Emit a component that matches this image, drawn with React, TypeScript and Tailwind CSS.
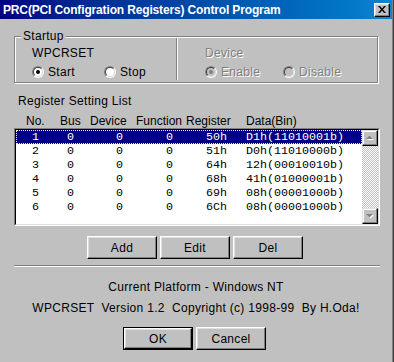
import React from "react";

const rows = [
  ["1", "0", "0", "0", "50h", "D1h(11010001b)"],
  ["2", "0", "0", "0", "51h", "D0h(11010000b)"],
  ["3", "0", "0", "0", "64h", "12h(00010010b)"],
  ["4", "0", "0", "0", "68h", "41h(01000001b)"],
  ["5", "0", "0", "0", "69h", "08h(00001000b)"],
  ["6", "0", "0", "0", "6Ch", "08h(00001000b)"],
];

const raised =
  "bg-[#c0c0c0] border border-t-white border-l-white border-r-black border-b-black shadow-[inset_-1px_-1px_0_#808080,inset_1px_1px_0_#dfdfdf]";

const disabledText = "text-[#808080] [text-shadow:1px_1px_0_#fff]";

const Radio = ({
  label,
  checked,
  disabled,
  width,
}: {
  label: string;
  checked?: boolean;
  disabled?: boolean;
  width: string;
}): JSX.Element => (
  <div className={`flex items-center gap-[4px] ${width}`}>
    <span className="flex w-[12px] h-[12px] rounded-full border border-t-[#808080] border-l-[#808080] border-r-white border-b-white">
      <span
        className={`flex flex-1 items-center justify-center rounded-full border border-t-[#404040] border-l-[#404040] border-r-[#dfdfdf] border-b-[#dfdfdf] ${
          disabled ? "bg-[#c0c0c0]" : "bg-white"
        }`}
      >
        {checked && (
          <span
            className={`w-[4px] h-[4px] rounded-full ${disabled ? "bg-[#808080]" : "bg-black"}`}
          />
        )}
      </span>
    </span>
    <span className={disabled ? disabledText : ""}>{label}</span>
  </div>
);

const Button = ({ label, isDefault }: { label: string; isDefault?: boolean }): JSX.Element =>
  isDefault ? (
    <div className="w-[70px] h-[23px] border border-black flex">
      <div className={`flex-1 flex items-center justify-center ${raised}`}>{label}</div>
    </div>
  ) : (
    <div className={`w-[70px] h-[23px] flex items-center justify-center ${raised}`}>{label}</div>
  );

const Arrow = ({ up }: { up?: boolean }): JSX.Element => (
  <svg width="8" height="5" viewBox="0 0 8 5">
    <path d={up ? "M1 4h7L4.5 0.5z" : "M1 1h7L4.5 4.5z"} fill="#fff" />
    <path d={up ? "M0 3h7L3.5 -0.5z" : "M0 0h7L3.5 3.5z"} fill="#808080" />
  </svg>
);

const App = (): JSX.Element => {
  return (
    <div className="w-[394px] h-[362px] bg-[#c0c0c0] flex flex-col text-black font-['Liberation_Sans',Arial,sans-serif] text-[12px] leading-[14px] tracking-[0.3px] shadow-[inset_-1px_0_0_#404040,inset_-2px_0_0_#808080] overflow-hidden">
      {/* title bar */}
      <div className="w-[392px] h-[19px] flex items-center justify-between pl-[3px] pr-[2px] bg-gradient-to-r from-[#000080] to-[#1084d0]">
        <span className="text-white font-bold tracking-[-0.15px] text-[12px]">
          PRC(PCI Configration Registers) Control Program
        </span>
        <div className={`w-[16px] h-[14px] flex items-center justify-center ${raised}`}>
          <svg width="8" height="7" viewBox="0 0 8 7">
            <path d="M0 0h2l2 2.5L6 0h2L5 3.5 8 7H6L4 4.5 2 7H0l3-3.5z" fill="#000" />
          </svg>
        </div>
      </div>

      {/* Startup group */}
      <div className="relative ml-[14px] mt-[17px] w-[364px] h-[47px] border border-[#808080] shadow-[1px_1px_0_#fff,inset_1px_1px_0_#fff] flex">
        <span className="absolute left-[6px] -top-[8px] bg-[#c0c0c0] px-[2px]">Startup</span>
        <div className="w-[161px] pl-[17px] pt-[9px] flex flex-col">
          <span>WPCRSET</span>
          <div className="flex mt-[5px]">
            <Radio label="Start" checked width="w-[72px]" />
            <Radio label="Stop" width="w-[60px]" />
          </div>
        </div>
        <div className="w-[2px] mt-[1px] mb-[2px] border-l border-[#808080] bg-white" />
        <div className="pl-[27px] pt-[9px] flex flex-col">
          <span className={disabledText}>Device</span>
          <div className="flex mt-[5px]">
            <Radio label="Enable" checked disabled width="w-[78px]" />
            <Radio label="Disable" disabled width="w-[70px]" />
          </div>
        </div>
      </div>

      {/* list */}
      <span className="ml-[18px] mt-[11px]">Register Setting List</span>
      <div className="ml-[14px] mt-[6px] pl-[12px] flex tracking-normal">
        <span className="w-[34px]">No.</span>
        <span className="w-[30px]">Bus</span>
        <span className="w-[46px]">Device</span>
        <span className="w-[50px]">Function</span>
        <span className="w-[60px]">Register</span>
        <span>Data(Bin)</span>
      </div>
      <div className="ml-[14px] w-[366px] h-[98px] flex border border-t-[#808080] border-l-[#808080] border-r-white border-b-white">
        <div className="flex flex-1 bg-white border border-t-black border-l-black border-r-[#dfdfdf] border-b-[#dfdfdf]">
          <div className="flex-1 flex flex-col font-['Liberation_Mono','Courier_New',monospace] text-[11.67px] tracking-normal">
            {rows.map((r, i) => (
              <div
                key={i}
                className={`h-[14px] flex items-center pl-[16px] ${
                  i === 0
                    ? "bg-[#000080] text-white outline-1 outline-dotted outline-[#ffff80] -outline-offset-1"
                    : ""
                }`}
              >
                <span className="w-[35px]">{r[0]}</span>
                <span className="w-[49px]">{r[1]}</span>
                <span className="w-[50px]">{r[2]}</span>
                <span className="w-[40px]">{r[3]}</span>
                <span className="w-[40px]">{r[4]}</span>
                <span>{r[5]}</span>
              </div>
            ))}
          </div>
          <div className="w-[16px] flex flex-col">
            <div className="w-[16px] h-[16px] flex items-center justify-center bg-[#c0c0c0] border border-t-[#dfdfdf] border-l-[#dfdfdf] border-r-black border-b-black shadow-[inset_-1px_-1px_0_#808080,inset_1px_1px_0_#fff]">
              <Arrow up />
            </div>
            <div className="flex-1 bg-[repeating-conic-gradient(#c0c0c0_0_25%,#fff_0_50%)] bg-[length:2px_2px]" />
            <div className="w-[16px] h-[16px] flex items-center justify-center bg-[#c0c0c0] border border-t-[#dfdfdf] border-l-[#dfdfdf] border-r-black border-b-black shadow-[inset_-1px_-1px_0_#808080,inset_1px_1px_0_#fff]">
              <Arrow />
            </div>
          </div>
        </div>
      </div>

      <div className="ml-[87px] mt-[10px] flex gap-[3px]">
        <Button label="Add" />
        <Button label="Edit" />
        <Button label="Del" />
      </div>

      <div className="ml-[14px] mt-[6px] w-[366px] h-[2px] border-t border-[#808080] bg-white" />

      <span className="mt-[13px] text-center pr-[2px]">Current Platform - Windows NT</span>
      <span className="mt-[7px] text-center pr-[2px] whitespace-pre">
        {"WPCRSET  Version 1.2  Copyright (c) 1998-99  By H.Oda!"}
      </span>

      <div className="ml-[123px] mt-[12px] flex gap-[3px]">
        <Button label="OK" isDefault />
        <Button label="Cancel" />
      </div>
    </div>
  );
};

export default App;
